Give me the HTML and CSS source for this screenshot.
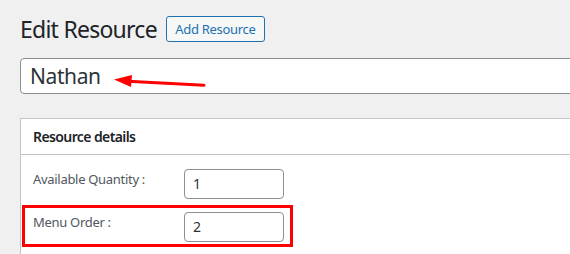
FILE: index.html
```html
<!DOCTYPE html>
<html lang="en">
<head>
<meta charset="utf-8">
<title>Edit Resource</title>
<link rel="stylesheet" href="styles.css">
</head>
<body>
<div class="wrap">
  <div class="head">
    <h1 class="heading">Edit Resource</h1>
    <a class="add-btn" href="#">Add Resource</a>
  </div>
  <div class="title-wrap">
    <div class="title-input">Nathan</div>
  </div>
  <div class="postbox">
    <h2 class="postbox-head">Resource details</h2>
    <div class="inside">
      <div class="field-row">
        <span class="field-label">Available Quantity :</span>
        <div class="field-input">1</div>
      </div>
      <div class="field-row">
        <span class="field-label">Menu Order :</span>
        <div class="field-input">2</div>
      </div>
    </div>
  </div>
  <svg class="arrow" width="100" height="20" viewBox="0 0 100 20" aria-hidden="true">
    <line x1="14" y1="7.2" x2="90" y2="11.2" stroke="#f00" stroke-width="3" stroke-linecap="round"/>
    <polygon points="0,5.5 18,1 17,13" fill="#f00"/>
  </svg>
  <div class="highlight"></div>
</div>
</body>
</html>
```

FILE: styles.css
```css
html, body {
  margin: 0;
  padding: 0;
}
body {
  background: #f0f0f1;
  font-family: "Noto Sans", "Open Sans", sans-serif;
  color: #3c434a;
}
.wrap {
  position: relative;
  box-sizing: border-box;
  width: 570px;
  height: 254px;
  overflow: hidden;
  padding: 16px 0 0 20px;
}
.head {
  display: flex;
  align-items: flex-start;
  gap: 9px;
  height: 26px;
}
.heading {
  margin: 0;
  font-size: 23px;
  font-weight: 400;
  line-height: 29px;
  color: #1d2327;
  letter-spacing: -0.75px;
  position: relative;
  top: -1px;
}
.add-btn {
  display: block;
  box-sizing: border-box;
  height: 26px;
  width: 99px;
  border: 1px solid #2271b1;
  border-radius: 3px;
  background: #f6f7f7;
  color: #2271b1;
  font-size: 13px;
  line-height: 24px;
  text-align: center;
  text-decoration: none;
  letter-spacing: -0.3px;
}
.title-wrap {
  margin-top: 16px;
  margin-right: -30px;
}
.title-input {
  box-sizing: border-box;
  height: 36px;
  border: 1px solid #8c8f94;
  border-radius: 4px;
  background: #fff;
  padding: 0 0 0 9px;
  font-size: 21px;
  line-height: 34px;
  color: #2c3338;
  letter-spacing: -0.4px;
}
.postbox {
  margin-top: 24px;
  margin-right: -30px;
  background: #fff;
  border: 1px solid #c3c4c7;
}
.postbox-head {
  margin: 0;
  height: 36px;
  box-sizing: border-box;
  border-bottom: 1px solid #c3c4c7;
  padding: 0 12px;
  font-size: 14px;
  font-weight: 600;
  line-height: 36px;
  color: #1d2327;
  letter-spacing: -0.6px;
}
.inside {
  padding: 14px 12px 20px;
  display: flex;
  flex-direction: column;
  gap: 13px;
}
.field-row {
  display: flex;
  align-items: flex-start;
  height: 30px;
}
.field-label {
  width: 151px;
  font-size: 13px;
  line-height: 20px;
  color: #50575e;
  letter-spacing: -0.3px;
}
.field-input {
  box-sizing: border-box;
  width: 100px;
  height: 30px;
  border: 1px solid #8c8f94;
  border-radius: 4px;
  background: #fff;
  padding: 0 8px;
  font-size: 14px;
  line-height: 28px;
  color: #2c3338;
}
.arrow {
  position: absolute;
  left: 114px;
  top: 74px;
}
.highlight {
  position: absolute;
  left: 22px;
  top: 205px;
  width: 271px;
  height: 42px;
  box-sizing: border-box;
  border: 3px solid #f00;
}
```
